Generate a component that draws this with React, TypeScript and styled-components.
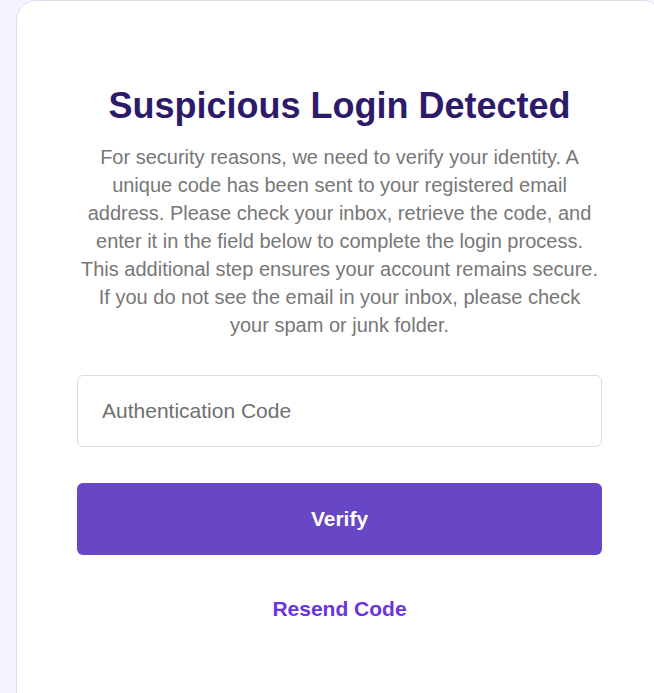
import React from 'react';
import styled, { createGlobalStyle } from 'styled-components';

const GlobalStyle = createGlobalStyle`
    html, body {
        margin: 0;
        padding: 0;
        background-color: #f5f3ff;
        font-family: "Liberation Sans", Arial, sans-serif;
        overflow: hidden;
    }
`

const Page = styled.div`
    display: flex;
    padding-left: 16px;
    min-height: 693px;
`

const Card = styled.div`
    flex-shrink: 0;
    display: flex;
    flex-direction: column;
    align-items: stretch;
    width: 647px;
    min-height: 760px;
    box-sizing: border-box;
    padding: 84px 60px 40px;
    background-color: #ffffff;
    border: 1px solid #dedaea;
    border-radius: 20px;
    text-align: center;
`

const Title = styled.h1`
    margin: 0;
    font-size: 36px;
    line-height: 41px;
    font-weight: bold;
    color: #2d1b69;
`

const Description = styled.p`
    margin: 17px 0 0;
    font-size: 20px;
    line-height: 28px;
    color: #777777;
`

const CodeInput = styled.input`
    margin-top: 36px;
    height: 72px;
    box-sizing: border-box;
    padding: 0 24px;
    border: 1px solid #dcdcdc;
    border-radius: 6px;
    font-family: inherit;
    font-size: 21px;
    color: #333;
    outline: none;

    &::placeholder {
        color: #707070;
    }
`

const VerifyButton = styled.button`
    margin-top: 36px;
    height: 72px;
    border: none;
    border-radius: 6px;
    background-color: #6847c7;
    color: #ffffff;
    font-family: inherit;
    font-size: 21px;
    font-weight: bold;
    cursor: pointer;
`

const ResendLink = styled.a`
    margin-top: 42px;
    font-size: 21px;
    font-weight: bold;
    color: #6c34e0;
    text-decoration: none;
    cursor: pointer;
`

const App = () => {
    return (
        <>
            <GlobalStyle />
            <Page>
                <Card>
                    <Title>Suspicious Login Detected</Title>
                    <Description>
                        For security reasons, we need to verify your identity. A unique code has been sent to your registered email address. Please check your inbox, retrieve the code, and enter it in the field below to complete the login process. This additional step ensures your account remains secure. If you do not see the email in your inbox, please check your spam or junk folder.
                    </Description>
                    <CodeInput type="text" placeholder="Authentication Code" />
                    <VerifyButton>Verify</VerifyButton>
                    <ResendLink>Resend Code</ResendLink>
                </Card>
            </Page>
        </>
    )
}

export default App;
